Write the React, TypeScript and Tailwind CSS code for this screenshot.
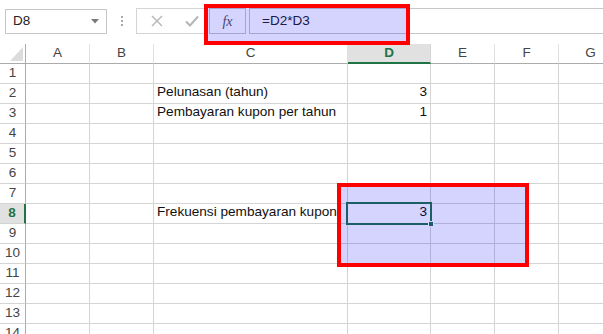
import React from "react";

const cols = ["A", "B", "C", "D", "E", "F", "G"];
const rows = Array.from({ length: 14 }, (_, i) => i + 1);

// cell contents keyed by "C2" etc.
const cells: Record<string, { text: string; right?: boolean }> = {
  C2: { text: "Pelunasan (tahun)" },
  D2: { text: "3", right: true },
  C3: { text: "Pembayaran kupon per tahun" },
  D3: { text: "1", right: true },
  C8: { text: "Frekuensi pembayaran kupon" },
  D8: { text: "3", right: true },
};

function FormulaBar() {
  return (
    <div className="flex items-start h-[44px] bg-white">
      <div className="ml-[5px] mt-[9px] w-[102px] h-[25px] border border-[#c6c6c6] flex items-center justify-between pl-[7px] pr-[7px] text-[13.5px] text-[#222]">
        <span>D8</span>
        <svg width="8" height="5" viewBox="0 0 8 5">
          <path d="M0 0h8L4 4.5z" fill="#7a7a7a" />
        </svg>
      </div>
      <div className="ml-[14px] mt-[16px] flex flex-col gap-[2px]">
        <div className="w-[2px] h-[2px] bg-[#a8a8a8]" />
        <div className="w-[2px] h-[2px] bg-[#a8a8a8]" />
        <div className="w-[2px] h-[2px] bg-[#a8a8a8]" />
      </div>
      <div className="ml-[13px] mt-[8px] w-[70px] h-[26px] border border-[#d4d4d4] flex items-center">
        <svg className="ml-[14px]" width="12" height="12" viewBox="0 0 12 12">
          <path d="M1 1l10 10M11 1L1 11" stroke="#b5b5b5" strokeWidth="1.4" />
        </svg>
        <svg className="ml-[22px]" width="14" height="12" viewBox="0 0 14 12">
          <path d="M1 6.5l4 4L13 1.5" stroke="#b5b5b5" strokeWidth="2" fill="none" />
        </svg>
      </div>
      <div className="ml-[3px] mt-[8px] w-[37px] h-[26px] border border-[#c6c6c6] flex items-center justify-center text-[14px] italic text-[#555] font-['Liberation_Serif',serif]">
        fx
      </div>
      <div className="ml-[3px] mt-[8px] flex-1 h-[26px] border-y border-l border-[#c6c6c6] flex items-center pl-[12px] text-[13.5px] text-[#222]">
        =D2*D3
      </div>
    </div>
  );
}

function Grid() {
  return (
    <div className="grid grid-cols-[26px_64px_64px_194px_83px_64px_64px_64px] auto-rows-[20px]">
      {/* corner */}
      <div className="relative border-r border-b border-[#ababab] bg-white">
        <svg className="absolute left-[10px] top-[3px]" width="13" height="14" viewBox="0 0 13 14">
          <path d="M13 0v14H0z" fill="#dcdcdc" />
        </svg>
      </div>
      {cols.map((c) =>
        c === "D" ? (
          <div
            key={c}
            className="flex items-center justify-center bg-[#e1e1e1] border-r border-[#d4d4d4] border-b-2 border-b-[#217346] text-[13.5px] font-bold text-[#217346]"
          >
            {c}
          </div>
        ) : (
          <div
            key={c}
            className="flex items-center justify-center border-r border-r-[#e1e1e1] border-b border-b-[#ababab] text-[13.5px] text-[#444]"
          >
            {c}
          </div>
        )
      )}
      {rows.map((r) => (
        <React.Fragment key={r}>
          {r === 8 ? (
            <div className="flex items-center justify-center bg-[#e1e1e1] border-r-2 border-r-[#217346] border-b border-b-[#d4d4d4] text-[13.5px] font-bold text-[#217346]">
              {r}
            </div>
          ) : (
            <div className="flex items-center justify-center border-r border-r-[#ababab] border-b border-b-[#d4d4d4] text-[13.5px] text-[#444]">
              {r}
            </div>
          )}
          {cols.map((c) => {
            const cell = cells[c + r];
            return (
              <div
                key={c}
                className={`flex items-end pb-[1px] px-[3px] overflow-hidden whitespace-nowrap border-r border-b border-[#d4d4d4] text-[13.6px] text-[#111] ${
                  cell?.right ? "justify-end" : "justify-start"
                }`}
              >
                {cell?.text}
              </div>
            );
          })}
        </React.Fragment>
      ))}
    </div>
  );
}

export default function App() {
  return (
    <div className="relative w-[603px] h-[334px] overflow-hidden bg-white font-['Liberation_Sans',Arial,sans-serif]">
      <FormulaBar />
      <Grid />

      {/* active cell D8 */}
      <div className="absolute left-[346px] top-[202px] w-[86px] h-[23px] border-2 border-[#217346]" />
      <div className="absolute left-[428px] top-[221px] w-[6px] h-[6px] bg-[#217346] border border-white" />

      {/* highlight boxes */}
      <div className="absolute left-[204px] top-[4px] w-[206px] h-[41px] border-4 border-[#ff0000] bg-[rgba(0,0,255,0.17)]" />
      <div className="absolute left-[337px] top-[183px] w-[192px] h-[84px] border-4 border-[#ff0000] bg-[rgba(0,0,255,0.17)]" />
    </div>
  );
}
